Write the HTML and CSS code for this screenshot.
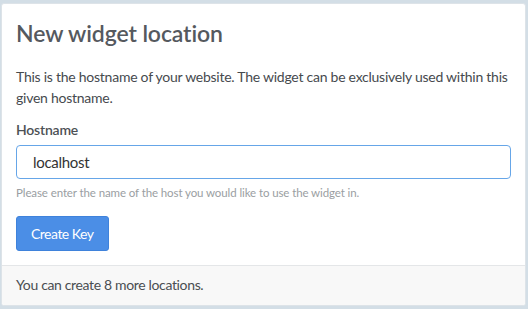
FILE: index.html
```html
<!DOCTYPE html>
<html>
<head>
<meta charset="utf-8">
<link rel="stylesheet" href="styles.css">
</head>
<body>
<div class="card">
  <div class="card-body">
    <h1 class="title">New widget location</h1>
    <p class="intro">This is the hostname of your website. The widget can be exclusively used within this given hostname.</p>
    <label class="label" for="host">Hostname</label>
    <input class="input" id="host" type="text" value="localhost">
    <div class="help">Please enter the name of the host you would like to use the widget in.</div>
    <button class="btn">Create Key</button>
  </div>
  <div class="card-footer">You can create 8 more locations.</div>
</div>
</body>
</html>
```

FILE: styles.css
```css
html, body {
  margin: 0;
  padding: 0;
  height: 100%;
}
body {
  background: #d3dee6;
  font-family: Lato, "Open Sans", sans-serif;
  color: #4a4a4a;
  padding: 3px 2px 3px 1px;
  box-sizing: border-box;
}
.card {
  background: #fff;
  border: 1px solid #dde3e8;
  border-radius: 3px;
  height: 100%;
  box-sizing: border-box;
  display: flex;
  flex-direction: column;
  overflow: hidden;
}
.card-body {
  padding: 15px 14px 14px 14px;
  display: flex;
  flex-direction: column;
  align-items: flex-start;
  flex: 1;
}
.title {
  margin: 0;
  font-size: 23px;
  font-weight: 600;
  color: #55595e;
  line-height: 28px;
  letter-spacing: -0.1px;
}
.intro {
  margin: 19px 0 0;
  font-size: 14px;
  line-height: 21px;
  color: #464a4e;
  letter-spacing: -0.25px;
}
.label {
  margin-top: 12px;
  font-size: 14px;
  font-weight: 600;
  color: #4d5155;
  line-height: 20px;
  letter-spacing: -0.2px;
}
.input {
  margin-top: 5px;
  width: 100%;
  box-sizing: border-box;
  height: 34px;
  border: 1px solid #66a6e8;
  border-radius: 4px;
  padding: 0 16px;
  font-family: inherit;
  font-size: 15px;
  letter-spacing: -0.3px;
  color: #333;
  outline: none;
}
.help {
  margin-top: 6px;
  font-size: 11.5px;
  color: #9a9ea2;
  line-height: 16px;
  letter-spacing: -0.1px;
}
.btn {
  margin-top: 15px;
  height: 35px;
  padding: 0 14px;
  background: #4b8ee6;
  border: 1px solid #3f82db;
  border-radius: 3px;
  color: #fff;
  font-family: inherit;
  font-size: 14px;
  letter-spacing: -0.5px;
}
.card-footer {
  background: #f8f8f8;
  border-top: 1px solid #e4e6e8;
  padding: 0 14px 2px;
  height: 41px;
  box-sizing: border-box;
  display: flex;
  align-items: center;
  font-size: 14px;
  color: #4a4e52;
  letter-spacing: -0.35px;
}
```
